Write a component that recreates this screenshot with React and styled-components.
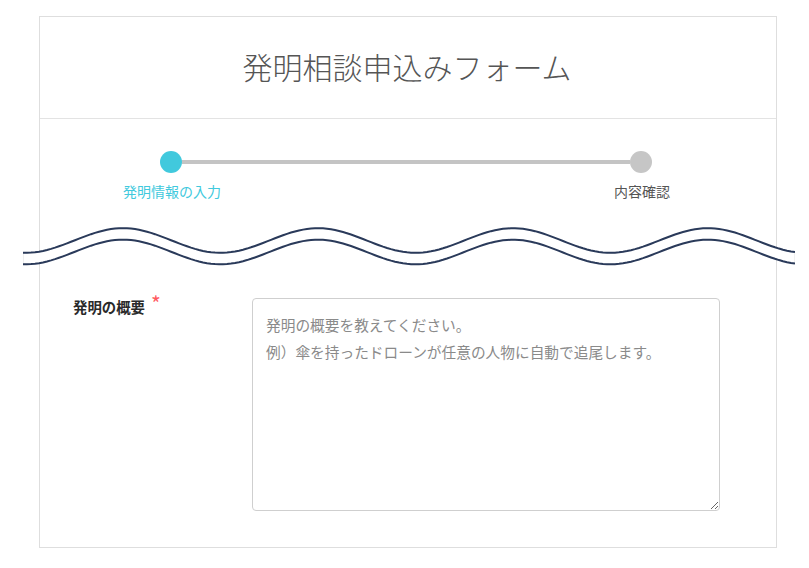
import React from "react";
import styled, { createGlobalStyle } from "styled-components";

const GlobalStyle = createGlobalStyle`
  body {
    margin: 0;
    background: #fff;
    font-family: "Noto Sans CJK JP", "Noto Sans", sans-serif;
    color: #333;
  }
`;

const Card = styled.div`
  box-sizing: border-box;
  width: 738px;
  margin: 16px 0 0 39px;
  border: 1px solid #dedede;
  background: #fff;
`;

const Header = styled.header`
  height: 101px;
  display: flex;
  align-items: center;
  justify-content: center;
  border-bottom: 1px solid #e3e3e3;
`;

const Title = styled.h1`
  margin: 0;
  font-size: 30px;
  font-weight: 300;
  color: #555;
  transform: translate(-1px, -2px);
`;

const Steps = styled.div`
  padding: 32px 0 0 82px;
  width: 570px;
`;

const Track = styled.div`
  display: flex;
  align-items: center;
  padding: 0 40px 0 38px;
`;

const Dot = styled.span`
  flex: none;
  width: 22px;
  height: 22px;
  border-radius: 50%;
  background: ${(p) => (p.$active ? "#41c9dd" : "#c6c6c6")};
`;

const Line = styled.span`
  flex: 1;
  height: 4px;
  background: #c4c4c4;
`;

const Labels = styled.div`
  display: flex;
  justify-content: space-between;
  margin-top: 9px;
`;

const StepLabel = styled.span`
  width: 100px;
  text-align: center;
  font-size: 14px;
  line-height: 18px;
  color: ${(p) => (p.$active ? "#41c9dd" : "#555")};
`;

const Cut = styled.svg`
  display: block;
  margin: 24px 0 0 -17px;
`;

const FormRow = styled.div`
  display: flex;
  padding: 28px 56px 36px 33px;
`;

const Label = styled.label`
  width: 179px;
  flex: none;
  margin-top: -1px;
  font-size: 14.4px;
  font-weight: 700;
  color: #2a2a2a;
  line-height: 20px;
`;

const Required = styled.sup`
  color: #ff5a5f;
  font-size: 21px;
  font-weight: 400;
  margin-left: 6px;
  vertical-align: 1px;
  line-height: 0;
`;

const TextArea = styled.textarea`
  box-sizing: border-box;
  width: 468px;
  height: 213px;
  padding: 12px 13px;
  border: 1px solid #cfcfcf;
  border-radius: 4px;
  font-family: "Noto Sans CJK JP", "Noto Sans", sans-serif;
  font-size: 14.7px;
  line-height: 27px;
  color: #333;
  outline: none;
  &::placeholder {
    color: #8a8a8a;
  }
`;

// double wavy "cut" band drawn across the card
const WAVE_W = 772;
const PERIOD = 195;
const AMP = 12.3;

const wavePath = (mid) => {
  let d = "";
  for (let x = 0; x <= WAVE_W; x += 4) {
    const y = mid - AMP * Math.cos((2 * Math.PI * (x - 100)) / PERIOD);
    d += `${x === 0 ? "M" : "L"}${x} ${y.toFixed(2)} `;
  }
  return d;
};

const Wave = () => {
  const top = wavePath(16.5);
  const bottom = wavePath(28);
  const back = bottom
    .trim()
    .split(/ (?=L|M)/)
    .reverse()
    .map((s) => "L" + s.slice(1))
    .join(" ");
  return (
    <Cut width={WAVE_W} height="46" viewBox={`0 0 ${WAVE_W} 46`}>
      <path d={`${top} ${back} Z`} fill="#fff" stroke="#d8d8d8" strokeWidth="0.8" />
      <path d={top} fill="none" stroke="#2a3a5a" strokeWidth="2" />
      <path d={bottom} fill="none" stroke="#2a3a5a" strokeWidth="2" />
    </Cut>
  );
};

export default function App() {
  return (
    <>
      <GlobalStyle />
      <Card>
        <Header>
          <Title>発明相談申込みフォーム</Title>
        </Header>
        <Steps>
          <Track>
            <Dot $active />
            <Line />
            <Dot />
          </Track>
          <Labels>
            <StepLabel $active>発明情報の入力</StepLabel>
            <StepLabel>内容確認</StepLabel>
          </Labels>
        </Steps>
        <Wave />
        <FormRow>
          <Label htmlFor="summary">
            発明の概要<Required>*</Required>
          </Label>
          <TextArea
            id="summary"
            placeholder={"発明の概要を教えてください。\n例）傘を持ったドローンが任意の人物に自動で追尾します。"}
          />
        </FormRow>
      </Card>
    </>
  );
}
